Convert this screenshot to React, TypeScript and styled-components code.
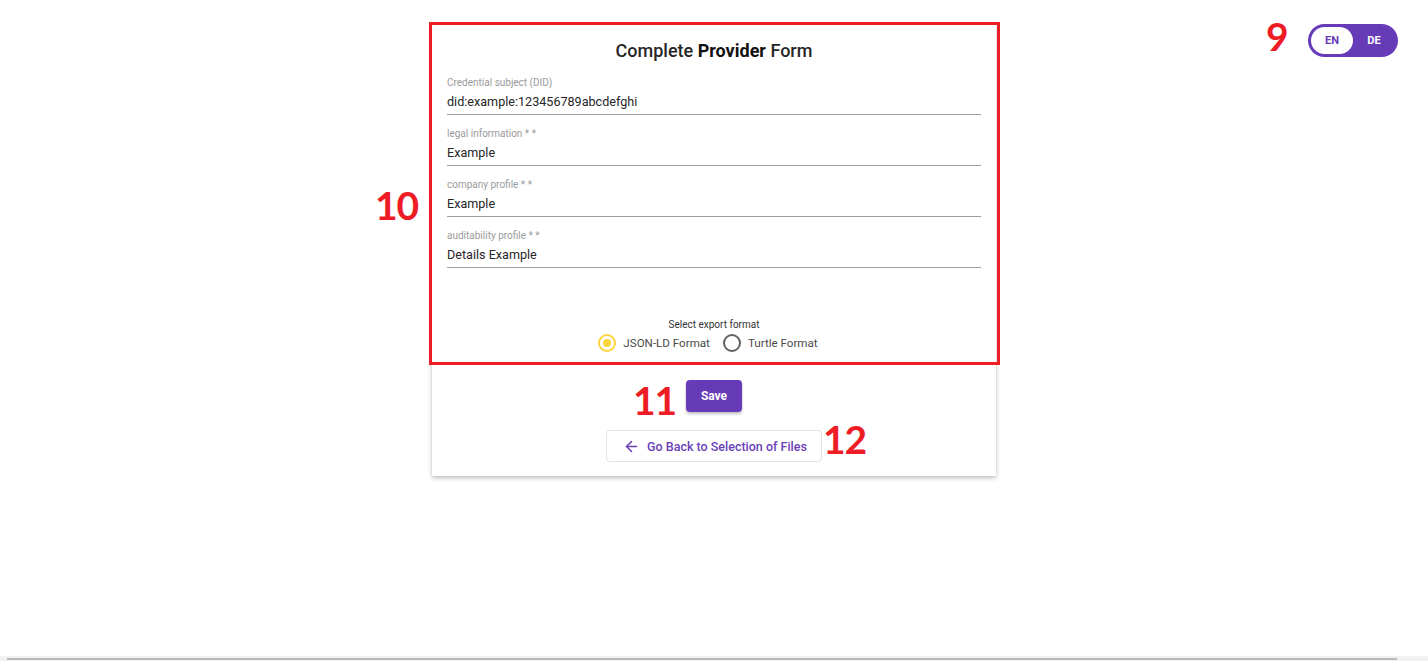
import { createGlobalStyle, styled } from "styled-components";
import { FiArrowLeft } from "react-icons/fi";

const GlobalStyle = createGlobalStyle`
    html, body {
        margin: 0;
        padding: 0;
        background: #ffffff;
        font-family: Roboto, "Noto Sans", Arial, sans-serif;
    }
    * { box-sizing: border-box; }
`;

const fields = [
    { label: "Credential subject (DID)", value: "did:example:123456789abcdefghi" },
    { label: "legal information * *", value: "Example" },
    { label: "company profile * *", value: "Example" },
    { label: "auditability profile * *", value: "Details Example" },
];

const marks = [
    { text: "9", x: 1266, y: 14 },
    { text: "10", x: 375, y: 183 },
    { text: "11", x: 633, y: 378 },
    { text: "12", x: 823, y: 417 },
];

export default function App() {
    return (
        <Page>
            <GlobalStyle />
            <Main>
                <Card>
                    <Title>Complete <b>Provider</b> Form</Title>
                    {fields.map((f) => (
                        <Field key={f.label}>
                            <FieldLabel>{f.label}</FieldLabel>
                            <FieldValue>{f.value}</FieldValue>
                        </Field>
                    ))}
                    <ExportLabel>Select export format</ExportLabel>
                    <RadioRow>
                        <RadioOption>
                            <RadioCircle $checked />
                            JSON-LD Format
                        </RadioOption>
                        <RadioOption>
                            <RadioCircle />
                            Turtle Format
                        </RadioOption>
                    </RadioRow>
                    <SaveButton>Save</SaveButton>
                    <BackButton>
                        <FiArrowLeft />
                        Go Back to Selection of Files
                    </BackButton>
                </Card>
                <LangToggle>
                    <LangOption $active>EN</LangOption>
                    <LangOption>DE</LangOption>
                </LangToggle>
            </Main>
            <ScrollTrack>
                <ScrollThumb />
            </ScrollTrack>

            <HighlightBox />
            {marks.map((m) => (
                <Mark key={m.text} style={{ left: m.x, top: m.y }}>{m.text}</Mark>
            ))}
        </Page>
    );
}

const Page = styled.div`
    position: relative;
    height: 661px;
    display: flex;
    flex-direction: column;
    overflow: hidden;
`;

const Main = styled.div`
    flex: 1;
    display: grid;
    grid-template-columns: 1fr 564px 1fr;
    align-items: start;
    padding-top: 24px;
`;

const Card = styled.div`
    grid-column: 2;
    background: #ffffff;
    box-shadow: 0 2px 5px rgba(0, 0, 0, 0.22), 0 1px 2px rgba(0, 0, 0, 0.08);
    padding: 0 15px 14px;
    display: flex;
    flex-direction: column;
`;

const Title = styled.h1`
    margin: 0 0 1px;
    padding-top: 15px;
    text-align: center;
    font-size: 18px;
    line-height: 24px;
    font-weight: 500;
    color: #262626;

    b {
        font-weight: 700;
        color: #111;
    }
`;

const Field = styled.div`
    padding-top: 13px;
    display: flex;
    flex-direction: column;
    border-bottom: 1px solid #9e9e9e;
    padding-bottom: 3px;
`;

const FieldLabel = styled.span`
    font-size: 10px;
    line-height: 12px;
    color: #9a9a9a;
`;

const FieldValue = styled.span`
    margin-top: 4px;
    font-size: 12.6px;
    line-height: 18px;
    color: #262626;
`;

const ExportLabel = styled.div`
    margin-top: 51px;
    text-align: center;
    font-size: 10px;
    line-height: 12px;
    color: #333;
`;

const RadioRow = styled.div`
    margin-top: 2px;
    height: 20px;
    display: flex;
    justify-content: center;
    gap: 13px;
    padding-right: 12px;
`;

const RadioOption = styled.label`
    display: flex;
    align-items: center;
    gap: 7px;
    font-size: 11.6px;
    color: #4a4a4a;
`;

const RadioCircle = styled.span<{ $checked?: boolean }>`
    width: 18px;
    height: 18px;
    border-radius: 50%;
    border: 2px solid ${(p) => (p.$checked ? "#fdd43b" : "#616161")};
    display: flex;
    align-items: center;
    justify-content: center;

    &::after {
        content: "";
        width: 8px;
        height: 8px;
        border-radius: 50%;
        background: ${(p) => (p.$checked ? "#fdd43b" : "transparent")};
    }
`;

const SaveButton = styled.button`
    align-self: center;
    margin-top: 27px;
    height: 32px;
    padding: 0 15px;
    border: none;
    border-radius: 4px;
    background: #673ab7;
    color: #ffffff;
    font-family: Roboto, sans-serif;
    font-size: 12px;
    font-weight: 700;
    box-shadow: 0 2px 3px rgba(0, 0, 0, 0.25);
`;

const BackButton = styled.button`
    align-self: center;
    margin-top: 18px;
    height: 32px;
    padding: 0 14px 0 16px;
    display: flex;
    align-items: center;
    gap: 7px;
    border: 1px solid #e2e2e2;
    border-radius: 4px;
    background: #ffffff;
    color: #6a3fb8;
    font-family: Roboto, sans-serif;
    font-size: 12.5px;
    font-weight: 500;

    svg {
        width: 17px;
        height: 17px;
        stroke-width: 2.2;
    }
`;

const LangToggle = styled.div`
    grid-column: 3;
    justify-self: end;
    margin-right: 30px;
    width: 90px;
    height: 33px;
    border-radius: 17px;
    background: #673ab7;
    padding: 3px;
    display: flex;
`;

const LangOption = styled.span<{ $active?: boolean }>`
    flex: 1;
    border-radius: 14px;
    display: flex;
    align-items: center;
    justify-content: center;
    font-size: 11px;
    font-weight: 700;
    background: ${(p) => (p.$active ? "#ffffff" : "transparent")};
    color: ${(p) => (p.$active ? "#673ab7" : "#ffffff")};
`;

const ScrollTrack = styled.div`
    height: 5px;
    background: #f1f1f1;
    padding: 1px 31px 1px 7px;
`;

const ScrollThumb = styled.div`
    height: 2px;
    margin-top: 1px;
    background: #b9b9b9;
`;

const HighlightBox = styled.div`
    position: absolute;
    left: 429px;
    top: 22px;
    width: 571px;
    height: 343px;
    border: 3px solid #ee1c25;
    pointer-events: none;
`;

const Mark = styled.span`
    position: absolute;
    font-family: Lato, "Open Sans", sans-serif;
    font-weight: 700;
    font-size: 39px;
    line-height: 44px;
    letter-spacing: -1px;
    color: #ee1c25;
`;
